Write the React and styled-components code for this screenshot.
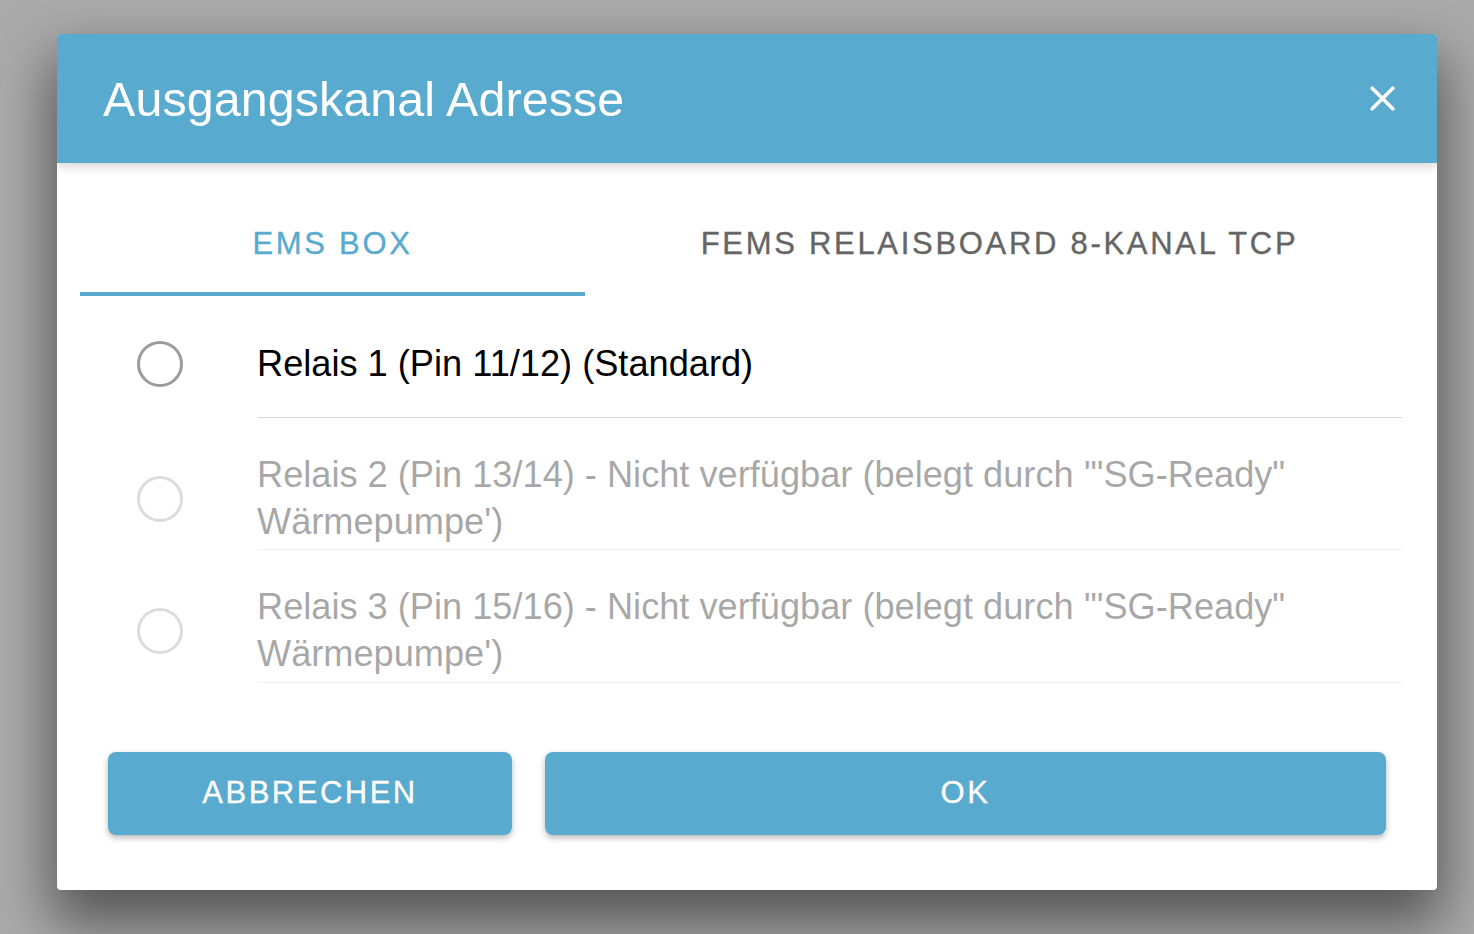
import React from "react";
import styled, { createGlobalStyle } from "styled-components";

const BLUE = "#59aacf";

const Global = createGlobalStyle`
  html, body {
    margin: 0;
    padding: 0;
    background: #ababab;
    font-family: "Liberation Sans", Arial, Helvetica, sans-serif;
  }
  * { box-sizing: border-box; }
`;

const Page = styled.div`
  display: flex;
  align-items: flex-start;
  width: 1474px;
  height: 934px;
  padding: 34px 37px 0 57px;
  overflow: hidden;
  background: #ababab;
`;

const Modal = styled.div`
  flex: 1;
  display: flex;
  flex-direction: column;
  background: #fff;
  border-radius: 4px;
  overflow: hidden;
  box-shadow: 0 28px 56px 6px rgba(0, 0, 0, 0.5);
`;

const Header = styled.header`
  position: relative;
  z-index: 1;
  height: 129px;
  display: flex;
  align-items: center;
  justify-content: space-between;
  padding: 0 42px 0 46px;
  background: ${BLUE};
  box-shadow: 0 3px 10px rgba(0, 0, 0, 0.18);
`;

const Title = styled.h2`
  margin: 0;
  font-size: 48.4px;
  font-weight: 400;
  color: #fff;
  letter-spacing: 0.1px;
`;

const CloseButton = styled.button`
  width: 25px;
  height: 25px;
  padding: 0;
  border: none;
  background: none;
  display: flex;
  cursor: pointer;
`;

const TabBar = styled.nav`
  display: flex;
  margin: 31px 23px 0;
`;

const Tab = styled.button`
  flex: ${(p) => (p.$width ? `0 0 ${p.$width}px` : "1 1 0")};
  height: 102px;
  padding: 0;
  padding-top: 2px;
  border: none;
  border-bottom: 4px solid ${(p) => (p.$active ? BLUE : "transparent")};
  background: none;
  font-family: inherit;
  font-size: 31px;
  font-weight: 400;
  letter-spacing: 2.7px;
  text-transform: uppercase;
  color: ${(p) => (p.$active ? BLUE : "#656565")};
  -webkit-text-stroke: 0.35px currentColor;
  cursor: pointer;
`;

const List = styled.div`
  margin-top: 11px;
`;

const Row = styled.label`
  display: block;
  min-height: 111px;
  padding: 34px 35px 5px 80px;
  opacity: ${(p) => (p.$disabled ? 0.34 : 1)};
  background: linear-gradient(#d6d6d6, #d6d6d6) no-repeat 201px 100% /
    calc(100% - 236px) 1px;
`;

const RowContent = styled.div`
  display: flex;
  align-items: center;
`;

const RadioSlot = styled.span`
  flex: 0 0 121px;
  display: flex;
  align-items: center;
`;

const RadioCircle = styled.span`
  width: 46px;
  height: 46px;
  border-radius: 50%;
  border: 3px solid #9b9b9b;
`;

const LabelText = styled.span`
  flex: 1;
  margin-left: -1px;
  font-size: 36.2px;
  line-height: 46.7px;
  color: #000;
`;

const Footer = styled.footer`
  display: grid;
  grid-template-columns: 404px 1fr;
  gap: 33px;
  padding: 69px 51px 55px;
`;

const ActionButton = styled.button`
  height: 83px;
  border: none;
  border-radius: 8px;
  background: ${BLUE};
  color: #fff;
  font-family: inherit;
  font-size: 31px;
  font-weight: 400;
  letter-spacing: 2.5px;
  text-transform: uppercase;
  -webkit-text-stroke: 0.3px currentColor;
  box-shadow: 0 3px 6px rgba(0, 0, 0, 0.28);
  cursor: pointer;
`;

const CloseIcon = () => (
  <svg width="25" height="25" viewBox="0 0 25 25" fill="none">
    <path
      d="M2.2 2.2 22.8 22.8 M22.8 2.2 2.2 22.8"
      stroke="#fff"
      strokeWidth="3.6"
      strokeLinecap="round"
    />
  </svg>
);

const options = [
  { label: "Relais 1 (Pin 11/12) (Standard)", disabled: false },
  {
    label:
      "Relais 2 (Pin 13/14) - Nicht verfügbar (belegt durch '\"SG-Ready\" Wärmepumpe')",
    disabled: true,
  },
  {
    label:
      "Relais 3 (Pin 15/16) - Nicht verfügbar (belegt durch '\"SG-Ready\" Wärmepumpe')",
    disabled: true,
  },
];

export default function App() {
  return (
    <>
      <Global />
      <Page>
        <Modal>
          <Header>
            <Title>Ausgangskanal Adresse</Title>
            <CloseButton aria-label="Schließen">
              <CloseIcon />
            </CloseButton>
          </Header>
          <TabBar>
            <Tab $active $width={505}>EMS Box</Tab>
            <Tab>FEMS Relaisboard 8-Kanal TCP</Tab>
          </TabBar>
          <List>
            {options.map((o) => (
              <Row key={o.label} $disabled={o.disabled}>
                <RowContent>
                  <RadioSlot>
                    <RadioCircle />
                  </RadioSlot>
                  <LabelText>{o.label}</LabelText>
                </RowContent>
              </Row>
            ))}
          </List>
          <Footer>
            <ActionButton>Abbrechen</ActionButton>
            <ActionButton>OK</ActionButton>
          </Footer>
        </Modal>
      </Page>
    </>
  );
}
